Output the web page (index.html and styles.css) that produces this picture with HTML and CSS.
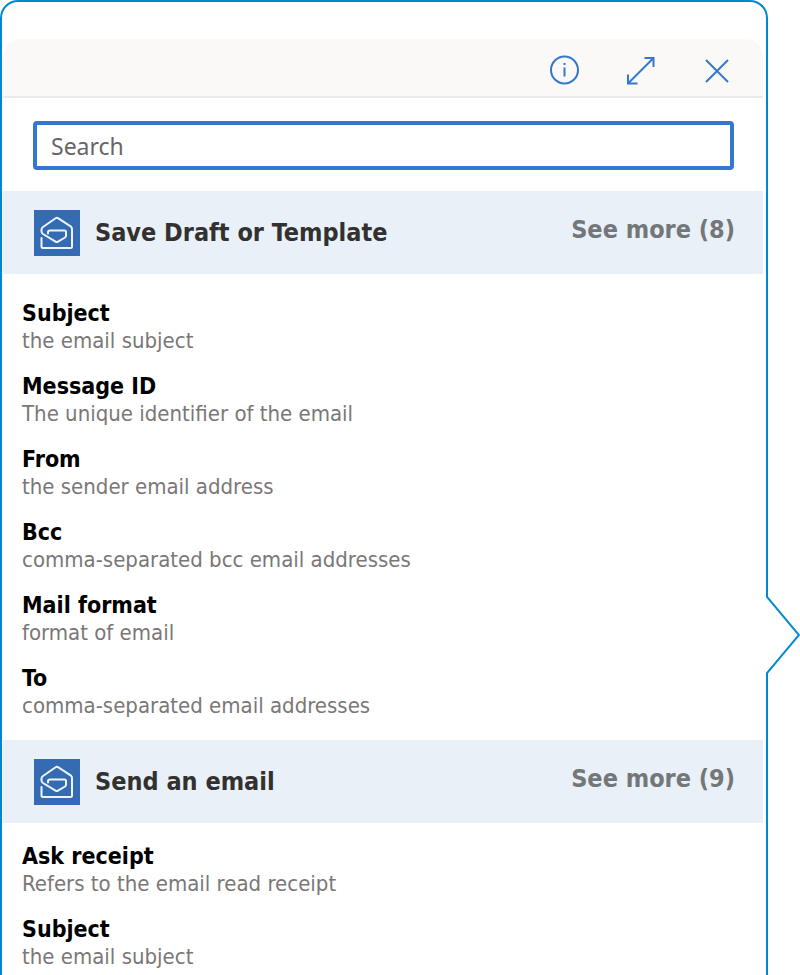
FILE: index.html
```html
<!DOCTYPE html>
<html lang="en">
<head>
<meta charset="utf-8">
<meta name="viewport" content="width=device-width, initial-scale=1">
<title>Dynamic content</title>
<link rel="stylesheet" href="styles.css">
</head>
<body>
<svg class="defs" aria-hidden="true">
  <symbol id="mail" viewBox="0 0 46 46">
    <rect width="46" height="46" fill="#346bb2"/>
    <path d="M7.500 28V36.500Q7.500 38 9 38H36.500Q38 38 38 36.500V19Q38 17.500 37 16.700L24 8.200Q22.800 7.300 21.600 8.200L9 17Q7.500 18 7.500 19.500V21.500Q7.500 23 9 24L21.500 31.700Q22.800 32.500 24 31.700L31 27.500Q32 26.800 32 25.500V22Q32 20.500 30.500 20.500H16Q14 20.500 14 22V23.500" fill="none" stroke="#eef4fb" stroke-width="2" stroke-linecap="round" stroke-linejoin="round"/>
  </symbol>
</svg>
<main class="callout">
  <header class="toolbar">
    <button type="button" class="tool" aria-label="Information">
      <svg viewBox="0 0 32 32"><circle cx="15.500" cy="16" r="13.500"/><path d="M15.500 13.500V22.500"/><path d="M15.500 9V11"/></svg>
    </button>
    <button type="button" class="tool" aria-label="Expand">
      <svg viewBox="0 0 32 32"><path d="M3 29.500L28.500 4M19.500 4H28.500V13M3 20.500V29.500H12.500"/></svg>
    </button>
    <button type="button" class="tool" aria-label="Close">
      <svg viewBox="0 0 32 32"><path d="M5 6L27 28M27 6L5 28"/></svg>
    </button>
  </header>
  <div class="search"><input type="search" placeholder="Search" aria-label="Search"></div>
  <section>
    <div class="group">
      <svg class="logo" aria-hidden="true"><use href="#mail"/></svg>
      <h2>Save Draft or Template</h2>
      <a href="#more-draft" class="more">See more (8)</a>
    </div>
    <dl class="fields">
      <div><dt>Subject</dt><dd>the email subject</dd></div>
      <div><dt>Message ID</dt><dd>The unique identifier of the email</dd></div>
      <div><dt>From</dt><dd>the sender email address</dd></div>
      <div><dt>Bcc</dt><dd>comma-separated bcc email addresses</dd></div>
      <div><dt>Mail format</dt><dd>format of email</dd></div>
      <div><dt>To</dt><dd>comma-separated email addresses</dd></div>
    </dl>
  </section>
  <section>
    <div class="group">
      <svg class="logo" aria-hidden="true"><use href="#mail"/></svg>
      <h2>Send an email</h2>
      <a href="#more-send" class="more">See more (9)</a>
    </div>
    <dl class="fields last">
      <div><dt>Ask receipt</dt><dd>Refers to the email read receipt</dd></div>
      <div><dt>Subject</dt><dd>the email subject</dd></div>
    </dl>
  </section>
  <svg class="pointer" viewBox="0 0 36 80" aria-hidden="true"><path class="gap" d="M0 1H4V79H0Z"/><path class="edge" d="M2 0V2L34 40L2 78V80"/></svg>
</main>
</body>
</html>
```
FILE: styles.css
```css
* { box-sizing: border-box; }
body {
  margin: 0;
  background: #fff;
  font-family: "DejaVu Sans Condensed", "DejaVu Sans", sans-serif;
  font-size: 22px;
  line-height: 28px;
}
.defs { position: absolute; width: 0; height: 0; }
.callout {
  position: relative;
  min-height: 100vh;
  margin-right: 32px;
  padding: 37px 3px 0 1px;
  border: 2px solid #0089d0;
  border-bottom: 0;
  border-radius: 18px 18px 0 0;
}
.toolbar {
  display: flex;
  justify-content: flex-end;
  align-items: center;
  gap: 44px;
  height: 59px;
  padding: 4px 30px 0 0;
  background: #faf9f8;
  border-bottom: 2px solid #edebe9;
  border-radius: 18px 18px 0 0;
}
.tool {
  width: 32px;
  height: 32px;
  padding: 0;
  border: 0;
  background: none;
}
.tool svg {
  display: block;
  width: 32px;
  height: 32px;
  fill: none;
  stroke: #3477d1;
  stroke-width: 2;
}
.search { padding: 23px 29px 21px 30px; }
.search input {
  display: block;
  width: 100%;
  height: 49px;
  padding: 0 14px;
  border: 4px solid #3477d1;
  border-radius: 4px;
  background: #fff;
  color: #323130;
  font: 23px "Noto Sans", sans-serif;
  outline: 0;
  appearance: none;
}
.search input::placeholder { color: #666; opacity: 1; }
.group {
  display: flex;
  align-items: center;
  min-height: 83px;
  padding: 0 28px 0 31px;
  background: #e9f0f7;
}
.logo { flex: none; width: 46px; height: 46px; }
h2 {
  flex: 1;
  margin: 0 0 0 15px;
  color: #323130;
  font-size: 25px;
  line-height: 28px;
}
.more {
  padding-bottom: 5px;
  color: #737779;
  font-size: 25px;
  font-weight: 700;
  text-decoration: none;
}
.fields {
  display: grid;
  gap: 17px;
  margin: 0;
  padding: 25px 19px 20px;
}
.last { padding: 19px 19px 0; }
dt { color: #000; font-size: 23px; font-weight: 700; }
dd { margin: 0; color: #7a7777; }
.pointer {
  position: absolute;
  top: 593px;
  right: -35px;
  width: 36px;
  height: 80px;
}
.gap { fill: #fff; }
.edge { fill: none; stroke: #0089d0; stroke-width: 2; }
```
